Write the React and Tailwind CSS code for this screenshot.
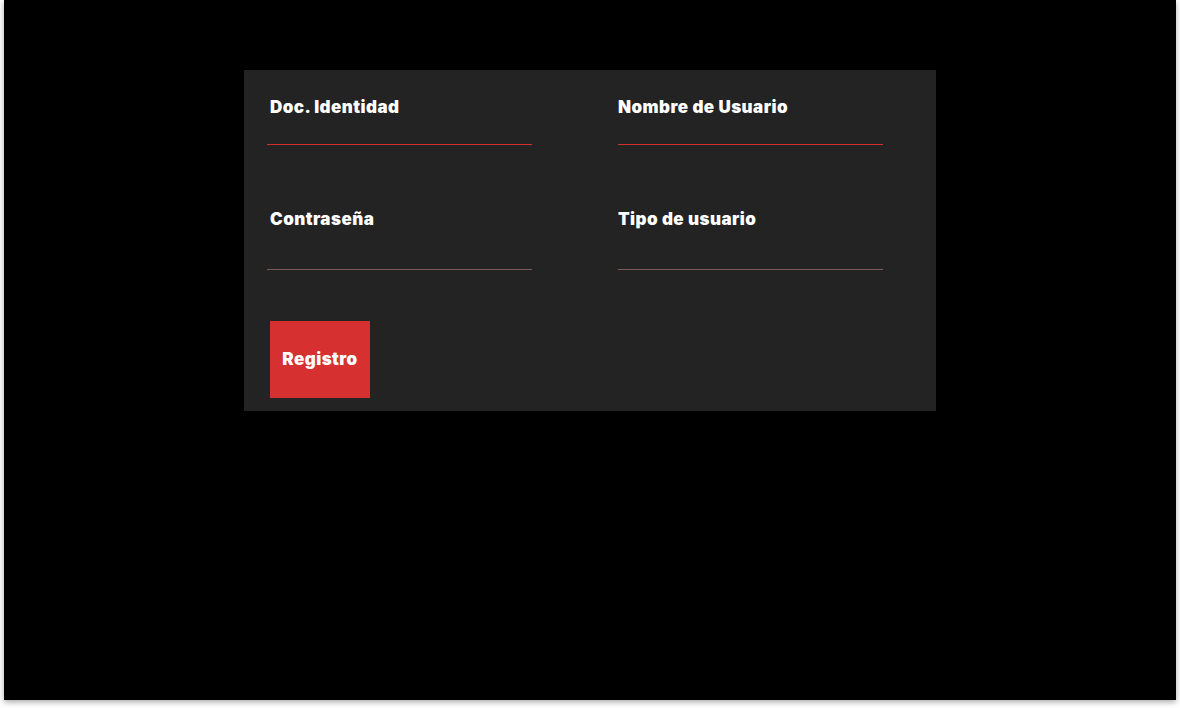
const Field = ({ label, line, h, indent }) => (
  <div className="w-[265px]">
    <label className={`block text-[17px] leading-[24px] font-black tracking-[0.45px] text-white ${indent ? "pl-[3px]" : ""}`}>
      {label}
    </label>
    <input
      type="text"
      className={`block w-full bg-transparent text-white outline-none border-b ${h} ${line}`}
    />
  </div>
);

export default function App() {
  return (
    <div className="min-h-screen bg-white font-['Inter',sans-serif]">
      <div className="mx-[4px] h-[700px] bg-black pt-[70px] shadow-[0_2px_6px_rgba(0,0,0,0.35)]">
        <form className="mx-auto w-[692px] bg-[#232323] pt-[25px] pb-[13px] pl-[23px]">
          <div className="flex gap-[86px]">
            <Field label="Doc. Identidad" line="border-[#d32f2f]" h="h-[26px]" indent />
            <Field label="Nombre de Usuario" line="border-[#d32f2f]" h="h-[26px]" />
          </div>
          <div className="mt-[62px] flex gap-[86px]">
            <Field label="Contraseña" line="border-[#7a5a5a]" h="h-[39px]" indent />
            <Field label="Tipo de usuario" line="border-[#7a5a5a]" h="h-[39px]" />
          </div>
          <button
            type="button"
            className="mt-[51px] ml-[3px] block h-[77px] w-[100px] bg-[#d63031] text-[17px] font-black tracking-[0.45px] text-white"
          >
            Registro
          </button>
        </form>
      </div>
    </div>
  );
}
